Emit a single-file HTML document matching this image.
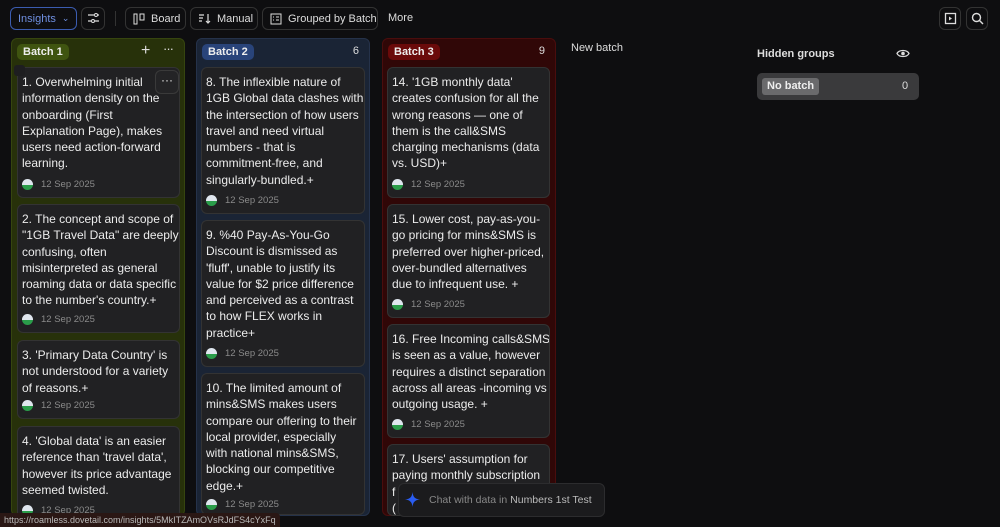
<!DOCTYPE html>
<html><head><meta charset="utf-8"><style>
*{box-sizing:border-box;margin:0;padding:0}
body{width:1000px;height:527px;overflow:hidden;background:#0e0e10;font-family:"Liberation Sans",sans-serif;color:#e8e8e8;position:relative}
.a{position:absolute}
.btn{position:absolute;top:7px;height:23px;border:1px solid #333;border-radius:6px;font-size:11px;color:#ddd;display:flex;align-items:center;padding:0 7px;gap:6px;white-space:nowrap}
.btn svg{flex-shrink:0}
.col{position:absolute;top:38px;width:174px;height:478px;border-radius:6px}
.tag{position:absolute;top:5px;left:5px;height:16px;padding:0 6px;border-radius:5px;font-size:11px;font-weight:bold;line-height:16px;color:#eee}
.card{position:absolute;background:#212123;border:1px solid #333;border-radius:6px;overflow:hidden}
.t{position:absolute;left:4px;top:6px;font-size:12px;line-height:16.3px;white-space:nowrap;color:#ececec}
.d{position:absolute;left:4px;bottom:7px;font-size:9.5px;color:#8a8a8a;display:flex;align-items:center;gap:8px}
.av{width:11px;height:11px;border-radius:50%;background:linear-gradient(#dfe6ee 0 55%,#2a9d4a 55%)}
</style></head><body>
<div class="btn" style="left:10px;width:67px;border-color:#3b5cb0;color:#6f8fe0">Insights <span style="font-size:9px">⌄</span></div>
<div class="btn" style="left:81px;width:24px;padding:0 5px"><svg width="13" height="11"><path d="M1 2h6M1 8h3M10 2h2M8 8h4" stroke="#ddd" stroke-width="1.3"/><circle cx="9" cy="2" r="1.5" fill="none" stroke="#ddd"/><circle cx="6" cy="8" r="1.5" fill="none" stroke="#ddd"/></svg></div>
<div class="a" style="left:115px;top:11px;width:1px;height:15px;background:#333"></div>
<div class="btn" style="left:125px;width:61px"><svg width="12" height="12"><rect x="1" y="1" width="3" height="10" fill="none" stroke="#ddd"/><rect x="7" y="1" width="4" height="6" fill="none" stroke="#ddd"/></svg>Board</div>
<div class="btn" style="left:190px;width:68px"><svg width="13" height="11"><path d="M1 2h5M1 5h4M1 8h3M10 1v9M8 8l2 2 2-2" stroke="#ddd" fill="none" stroke-width="1.2"/></svg>Manual</div>
<div class="btn" style="left:262px;width:116px"><svg width="12" height="12"><rect x="1" y="1" width="10" height="10" fill="none" stroke="#ddd"/><path d="M3 4h1M6 4h3M3 7h1M6 7h3" stroke="#ddd"/></svg>Grouped by Batch</div>
<div class="a" style="left:388px;top:12px;font-size:11px;color:#ddd">More</div>
<div class="btn" style="left:939px;width:22px;padding:0 4px"><svg width="13" height="13"><rect x="1.5" y="1.5" width="10" height="10" fill="none" stroke="#ddd" stroke-width="1.3"/><path d="M5 4.5l3 2-3 2z" fill="#ddd"/></svg></div>
<div class="btn" style="left:966px;width:22px;padding:0 4px"><svg width="13" height="13"><circle cx="5.5" cy="5.5" r="4" fill="none" stroke="#ddd" stroke-width="1.4"/><path d="M8.5 8.5l3.5 3.5" stroke="#ddd" stroke-width="1.4"/></svg></div>

<div class="col" style="left:11px;background:#27310a;border:1px solid #36450f">
<div class="tag" style="background:#3f5410">Batch 1</div>
<div class="a" style="left:129px;top:3px;font-size:16px;color:#ddd">+</div>
<div class="a" style="left:151px;top:2px;font-size:13px;color:#ddd;letter-spacing:-1px">···</div>
</div>
<div class="col" style="left:196px;background:#1a2435;border:1px solid #25324a">
<div class="tag" style="background:#29447a">Batch 2</div>
<div class="a" style="right:10px;top:6px;font-size:11px;color:#ddd">6</div>
</div>
<div class="col" style="left:382px;background:#300707;border:1px solid #4a0d0d">
<div class="tag" style="background:#6a0a0a">Batch 3</div>
<div class="a" style="right:10px;top:6px;font-size:11px;color:#ddd">9</div>
</div>
<div class="a" style="left:571px;top:42px;font-size:11px;color:#ddd">New batch</div>
<div class="a" style="left:757px;top:48px;font-size:11px;font-weight:bold;color:#ddd">Hidden groups</div>
<svg class="a" style="left:896px;top:47px" width="14" height="13"><path d="M1 6.5C3 2.5 11 2.5 13 6.5 11 10.5 3 10.5 1 6.5z" fill="none" stroke="#ddd" stroke-width="1.3"/><circle cx="7" cy="6.5" r="1.8" fill="#ddd"/></svg>
<div class="a" style="left:757px;top:73px;width:162px;height:27px;background:#3a3a3c;border-radius:5px"></div>
<div class="a" style="left:762px;top:78px;height:17px;padding:0 5px;background:#6a6a6c;border-radius:3px;font-size:11px;font-weight:bold;line-height:17px;color:#eee">No batch</div>
<div class="a" style="left:902px;top:80px;font-size:11px;color:#ddd">0</div>

<div class="card" style="left:17px;top:67px;width:163px;height:131px"><div class="t">1. Overwhelming initial<br>information density on the<br>onboarding (First<br>Explanation Page), makes<br>users need action-forward<br>learning.</div><div class="d"><div class="av"></div>12 Sep 2025</div>
<div class="a" style="left:137px;top:2px;width:24px;height:24px;border:1px solid #3a3a3a;border-radius:6px;background:#242426;text-align:center;font-size:12px;line-height:18px">···</div></div>
<div class="a" style="left:14px;top:65px;width:11px;height:11px;background:#1e1e20;border-radius:3px"></div>
<div class="card" style="left:17px;top:204px;width:163px;height:129px"><div class="t">2. The concept and scope of<br>"1GB Travel Data" are deeply<br>confusing, often<br>misinterpreted as general<br>roaming data or data specific<br>to the number's country.+</div><div class="d"><div class="av"></div>12 Sep 2025</div></div>
<div class="card" style="left:17px;top:340px;width:163px;height:79px"><div class="t">3. 'Primary Data Country' is<br>not understood for a variety<br>of reasons.+</div><div class="d"><div class="av"></div>12 Sep 2025</div></div>
<div class="card" style="left:17px;top:426px;width:163px;height:100px"><div class="t">4. 'Global data' is an easier<br>reference than 'travel data',<br>however its price advantage<br>seemed twisted.</div><div class="d" style="bottom:auto;top:78px"><div class="av"></div>12 Sep 2025</div></div>

<div class="card" style="left:201px;top:67px;width:164px;height:147px"><div class="t">8. The inflexible nature of<br>1GB Global data clashes with<br>the intersection of how users<br>travel and need virtual<br>numbers - that is<br>commitment-free, and<br>singularly-bundled.+</div><div class="d"><div class="av"></div>12 Sep 2025</div></div>
<div class="card" style="left:201px;top:220px;width:164px;height:147px"><div class="t">9. %40 Pay-As-You-Go<br>Discount is dismissed as<br>'fluff', unable to justify its<br>value for $2 price difference<br>and perceived as a contrast<br>to how FLEX works in<br>practice+</div><div class="d"><div class="av"></div>12 Sep 2025</div></div>
<div class="card" style="left:201px;top:373px;width:164px;height:142px"><div class="t">10. The limited amount of<br>mins&amp;SMS makes users<br>compare our offering to their<br>local provider, especially<br>with national mins&amp;SMS,<br>blocking our competitive<br>edge.+</div><div class="d" style="bottom:4px"><div class="av"></div>12 Sep 2025</div></div>

<div class="card" style="left:387px;top:67px;width:163px;height:131px"><div class="t">14. '1GB monthly data'<br>creates confusion for all the<br>wrong reasons — one of<br>them is the call&amp;SMS<br>charging mechanisms (data<br>vs. USD)+</div><div class="d"><div class="av"></div>12 Sep 2025</div></div>
<div class="card" style="left:387px;top:204px;width:163px;height:114px"><div class="t">15. Lower cost, pay-as-you-<br>go pricing for mins&amp;SMS is<br>preferred over higher-priced,<br>over-bundled alternatives<br>due to infrequent use. +</div><div class="d"><div class="av"></div>12 Sep 2025</div></div>
<div class="card" style="left:387px;top:324px;width:163px;height:114px"><div class="t">16. Free Incoming calls&amp;SMS<br>is seen as a value, however<br>requires a distinct separation<br>across all areas -incoming vs<br>outgoing usage. +</div><div class="d"><div class="av"></div>12 Sep 2025</div></div>
<div class="card" style="left:387px;top:444px;width:163px;height:72px"><div class="t">17. Users' assumption for<br>paying monthly subscription<br>f<br>(</div></div>

<div class="a" style="left:398px;top:483px;width:207px;height:34px;background:#1b1b1d;border:1px solid #2c2c2e;border-radius:6px"></div>
<svg class="a" style="left:405px;top:492px" width="15" height="15"><path d="M7.5 0C8 5 10 7 15 7.5 10 8 8 10 7.5 15 7 10 5 8 0 7.5 5 7 7 5 7.5 0z" fill="#2a5cf0"/></svg>
<div class="a" style="left:429px;top:494px;font-size:10.5px;color:#888">Chat with data in <span style="color:#bbb">Numbers 1st Test</span></div>
<div class="a" style="left:0;top:513px;height:14px;padding:0 4px;background:#2a1714;font-size:9px;line-height:14px;color:#bbb;border-radius:0 4px 0 0">https://roamless.dovetail.com/insights/5MkITZAmOVsRJdFS4cYxFq</div>
</body></html>
